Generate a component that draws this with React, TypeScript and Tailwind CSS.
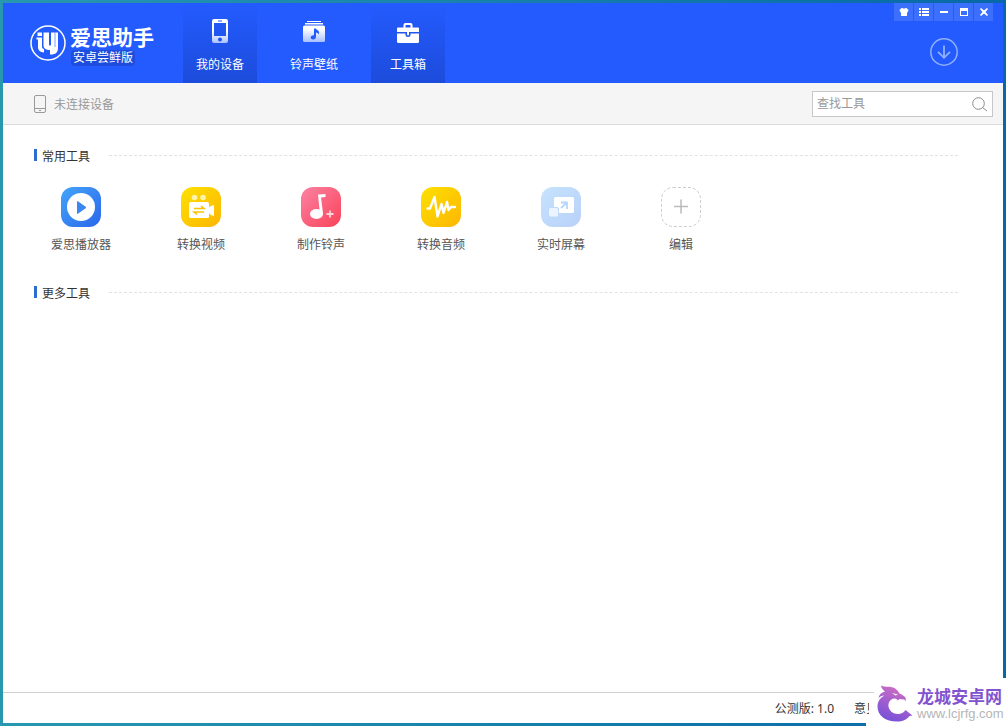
import React, { useState } from "react";

type IconProps = { className?: string };

const PhoneIcon = () => (
  <svg width="24" height="28" viewBox="0 0 24 28">
    <defs>
      <linearGradient id="phone" x1="0" y1="0" x2="0" y2="1">
        <stop offset="0.5" stopColor="#fff" />
        <stop offset="1" stopColor="#a9c0ff" />
      </linearGradient>
    </defs>
    <path
      fillRule="evenodd"
      fill="url(#phone)"
      d="M6 2h12a2 2 0 0 1 2 2v20a2 2 0 0 1-2 2H6a2 2 0 0 1-2-2V4a2 2 0 0 1 2-2zM6 6v13h12V6zM10 3.5v1h4v-1zM12 20.500a2 2 0 1 0 0 4a2 2 0 0 0 0-4z"
    />
  </svg>
);

const RingtoneIcon = () => (
  <svg width="24" height="28" viewBox="0 0 24 28">
    <defs>
      <linearGradient id="ringtone" x1="0" y1="0" x2="0" y2="1">
        <stop offset="0.2" stopColor="#fff" />
        <stop offset="1" stopColor="#a9c0ff" />
      </linearGradient>
    </defs>
    <path fill="#fff" d="M5 4h14v1H5zM3 6h18v1.500H3z" />
    <rect x="1" y="8.500" width="22" height="16.500" rx="1.500" fill="url(#ringtone)" />
    <path
      fill="#245bff"
      d="M12 11.500h1.800c.3 1.400 2.700 1.500 3.200 3.400.2 1-.1 1.800-.8 2.400 0-1.200-1-1.600-2.200-1.800v4.100c0 1.800-1.200 2.900-2.900 2.900-1.400 0-2.400-.8-2.400-2 0-1.500 1.600-2.500 3.300-2.200z"
    />
  </svg>
);

const ToolboxIcon = () => (
  <svg width="24" height="28" viewBox="0 0 24 28">
    <path
      fillRule="evenodd"
      fill="#fff"
      d="M7.500 10.500V8A2 2 0 0 1 9.500 6h5a2 2 0 0 1 2 2v2.500H22a1 1 0 0 1 1 1V15H1v-3.500a1 1 0 0 1 1-1zM9.500 10.500h5v-2A.5.5 0 0 0 14 8h-4a.5.5 0 0 0-.5.5z"
    />
    <path fill="#fff" d="M1 16.500h22v8a1.500 1.500 0 0 1-1.500 1.500h-19A1.500 1.500 0 0 1 1 24.500z" />
    <path fill="#2255ee" d="M9.500 15h5v2.500a2.500 2.500 0 0 1-5 0z" />
    <path fill="#fff" d="M11 14.500h2v3a1 1 0 0 1-2 0z" />
  </svg>
);

const LogoIcon = () => (
  <svg width="36" height="36" viewBox="0 0 36 36" fill="none">
    <circle cx="18" cy="18" r="17" stroke="#fff" strokeWidth="1.500" />
    <path fill="#fff" d="M7.500 7.500H12V11H7.500zM6.500 12.500H12v9c0 1.500.6 2.300 2 2.500v3.500c-3.800-.2-6-2-6-5.500v-7.500H6.500z" />
    <path
      fill="#fff"
      d="M13.500 7.500h5.500V19c0 1 .3 1.500 1 1.500s1-.5 1-1.500V7.500h7V23c0 4.500-2.500 6.500-7 6.500h-1V25c-4.500 0-6.500-1.500-6.500-5z"
    />
    <path stroke="#245bff" strokeWidth="0.600" d="M25 7.500V22" />
  </svg>
);

const DeviceIcon = () => (
  <svg width="14" height="20" viewBox="0 0 14 20" fill="none" stroke="#999">
    <rect x="1.500" y="1.500" width="11" height="17" rx="1.500" />
    <path d="M2 14.500h10M6 16.500h2" />
  </svg>
);

const SearchIcon = () => (
  <svg width="16" height="16" viewBox="0 0 16 16" fill="none" stroke="#8c8c8c">
    <circle cx="6.500" cy="7.500" r="5.800" />
    <path d="M10.500 11.500l4.500 3.500" />
  </svg>
);

const DownloadIcon = () => (
  <svg width="28" height="28" viewBox="0 0 28 28" fill="none" stroke="#8fb0ff">
    <circle cx="14" cy="14" r="13.200" strokeWidth="1.500" />
    <path strokeWidth="1.800" d="M14 7.500v12M8 13.800l6 6 6-6" />
  </svg>
);

const windowButtons = [
  { label: "皮肤", path: <path d="M3.500 2h1c.5.800 2.500.8 3 0h1L10.500 4 9.500 6.500H9V10H3V6.500h-.5L1.500 4z" /> },
  { label: "菜单", path: <path d="M1 2h2v2H1zM4 2h7v2H4zM1 5h2v2H1zM4 5h7v2H4zM1 8h2v2H1zM4 8h7v2H4z" /> },
  { label: "最小化", path: <path d="M2 5h8v2H2z" /> },
  { label: "最大化", path: <path fillRule="evenodd" d="M2 2h8v8H2zM3 5v4h6V5z" /> },
  { label: "关闭", path: <path d="M2 3l1-1 3 2.500L9 2l1 1-2.500 3L10 9l-1 1-3-2.500L3 10 2 9l2.500-3z" /> },
];

const navItems = [
  { label: "我的设备", icon: <PhoneIcon />, raised: true },
  { label: "铃声壁纸", icon: <RingtoneIcon />, raised: false },
  { label: "工具箱", icon: <ToolboxIcon />, raised: true },
];

const TileIcon = ({ id, from, to, children }: { id: string; from: string; to: string; children: React.ReactNode }) => (
  <svg width="40" height="40" viewBox="0 0 40 40" fill="none">
    <defs>
      <linearGradient id={id} x1="0" y1="0" x2="1" y2="1">
        <stop stopColor={from} />
        <stop offset="1" stopColor={to} />
      </linearGradient>
    </defs>
    <rect width="40" height="40" rx="12" fill={`url(#${id})`} />
    {children}
  </svg>
);

const tools = [
  {
    label: "爱思播放器",
    icon: (
      <TileIcon id="player" from="#43a5fa" to="#2b66ea">
        <circle cx="20" cy="20" r="14" fill="#fff" />
        <path d="M16.500 14.500v12l8.500-6z" fill="#3b86f2" stroke="#3b86f2" strokeLinejoin="round" />
      </TileIcon>
    ),
  },
  {
    label: "转换视频",
    icon: (
      <TileIcon id="video" from="#fde000" to="#fdb602">
        <circle cx="13.500" cy="10.500" r="2.800" fill="#fff3ac" />
        <circle cx="22" cy="10.500" r="2.800" fill="#fff3ac" />
        <rect x="8" y="15" width="20" height="16" rx="1.500" fill="#fff" />
        <path d="M28 20l1.500-.5V19l3.500-1v11l-3.500-1v-1L28 26.500z" fill="#fff" />
        <path d="M13 21.500h10l-3-2.500M23 25H13l3 2.500" stroke="#fbc403" strokeWidth="1.600" />
      </TileIcon>
    ),
  },
  {
    label: "制作铃声",
    icon: (
      <TileIcon id="music" from="#fb82a3" to="#fa4359">
        <ellipse cx="15.500" cy="27" rx="6.500" ry="5" fill="#fff" />
        <path d="M17 7.500l7.500-.5v3l-4.500.5 2 16-3 1z" fill="#fff" />
        <path d="M29 23.500v7M25.500 27h7" stroke="#ffd3da" strokeWidth="1.800" />
      </TileIcon>
    ),
  },
  {
    label: "转换音频",
    icon: (
      <TileIcon id="audio" from="#fde000" to="#fdb602">
        <path
          d="M6.500 21.500H9L13.500 10l3 19.500L20.500 17l2 9 3.500-11 1.500 8 2.500-3h4"
          stroke="#fff"
          strokeWidth="2.400"
          strokeLinejoin="round"
          strokeLinecap="round"
        />
      </TileIcon>
    ),
  },
  {
    label: "实时屏幕",
    icon: (
      <TileIcon id="screen" from="#c5e3fe" to="#b9d0f8">
        <rect x="13" y="10" width="20" height="16" rx="1.500" fill="#fff" />
        <path d="M20 21l6-5.500M20 15.500h6V22" stroke="#b8d6fa" strokeWidth="1.800" />
        <rect x="7" y="20" width="11" height="10" rx="2" fill="#bfdafa" />
        <rect x="8" y="21" width="9" height="8.500" rx="1.500" fill="#ecf5ff" />
      </TileIcon>
    ),
  },
  {
    label: "编辑",
    icon: (
      <svg width="40" height="40" viewBox="0 0 40 40" fill="none">
        <rect x="0.500" y="0.500" width="39" height="39" rx="11.500" stroke="#ccc" strokeDasharray="3 2" />
        <path d="M20 12.500v14M13 19.500h14" stroke="#bbb" strokeWidth="1.500" />
      </svg>
    ),
  },
];

const SectionTitle = ({ children }: { children: React.ReactNode }) => (
  <div className="flex items-center h-5 pl-[31px] pr-[45px]">
    <span className="w-[3px] h-3 bg-[#2a6fd0]" />
    <h2 className="ml-[5px] pt-[3px] text-[12px] leading-5 text-[#333]">{children}</h2>
    <span className="ml-[19px] flex-1 border-t border-dashed border-[#e2e2e2]" />
  </div>
);

const DragonIcon = ({ className }: IconProps) => (
  <svg className={className} width="38" height="38" viewBox="0 0 38 38">
    <defs>
      <linearGradient id="dragon" x1="0.700" y1="0" x2="0.300" y2="1">
        <stop stopColor="#d66fc0" />
        <stop offset="0.500" stopColor="#a45fce" />
        <stop offset="1" stopColor="#7650d8" />
      </linearGradient>
    </defs>
    <path
      fill="url(#dragon)"
      d="M4 .5c4 2 8 .5 12 2C20 4 21 6 22.500 8.500c2 1 4.500 2 6 4l.5 3.500-2-1.500-4.500-.5-1.500 1.500c-1-1.500-2.500-2-4.500-2C13 14.500 11 18 11.500 21.500 12.200 26 16 29 21 29c3 0 6-1.500 7.500-4l7 5.500-3 .5C30 34.500 26 36.500 20 36.500 8.500 36.500.5 30.500.5 21.500.5 16.500 3 13 7.500 10.500 4.500 10.500 3 11.500 1.500 13 2 9.500 4.500 7.500 8 6.500 6 5 4.500 3.500 4 .5z"
    />
    <path fill="#fff" d="M15 8l6 1.500-2.500 1z" />
  </svg>
);

export default function App() {
  const [query, setQuery] = useState("");

  return (
    <div className="relative flex flex-col min-h-screen p-[3px] bg-linear-to-r from-[#2798b0] to-[#0868a8] font-['Noto_Sans','Noto_Sans_CJK_SC',sans-serif] text-[12px] leading-5">
      <header className="flex h-20 bg-[#245bff] text-white">
        {/* Brand */}
        <div className="flex items-center w-[180px] pl-[27px]">
          <LogoIcon />
          <div className="ml-1 pt-1 whitespace-nowrap">
            <h1 className="text-[21px] leading-[26px] font-bold">爱思助手</h1>
            <span className="block w-16 h-4 ml-px rounded-sm bg-[#1e4ddd] text-center leading-4">安卓尝鲜版</span>
          </div>
        </div>

        <nav className="flex gap-5">
          {navItems.map((item) => (
            <button
              key={item.label}
              className={`flex flex-col items-center w-[74px] pt-[14px] gap-[10px] ${item.raised ? "bg-linear-to-b from-[#245bff] to-[#1d4cdb]" : ""}`}
            >
              {item.icon}
              <span>{item.label}</span>
            </button>
          ))}
        </nav>

        <div className="flex flex-col items-end ml-auto pr-[10px]">
          <div className="flex gap-px">
            {windowButtons.map((b) => (
              <button key={b.label} aria-label={b.label} className="flex items-center justify-center w-[19px] h-[18px] bg-[#3d6fff]">
                <svg width="12" height="12" viewBox="0 0 12 12" fill="#fff">
                  {b.path}
                </svg>
              </button>
            ))}
          </div>
          <button aria-label="下载" className="mt-[17px] mr-[35px]">
            <DownloadIcon />
          </button>
        </div>
      </header>

      {/* Device status + search */}
      <div className="flex items-center justify-between h-[42px] pl-[30px] pr-[10px] bg-[#f5f5f5] border-b border-[#dcdcdc]">
        <div className="flex items-center gap-[7px] text-[#999]">
          <DeviceIcon />
          <span className="pt-[2px]">未连接设备</span>
        </div>
        <label className="flex items-center w-[181px] h-[26px] px-1 bg-white border border-[#c8c8c8]">
          <input
            aria-label="查找工具"
            placeholder="查找工具"
            value={query}
            onChange={(e) => setQuery(e.target.value)}
            className="flex-1 min-w-0 outline-none placeholder:text-[#999]"
          />
          <SearchIcon />
        </label>
      </div>

      <main className="flex-1 pt-5 bg-white">
        <SectionTitle>常用工具</SectionTitle>
        <div className="flex flex-wrap pl-[18px] pt-[22px] pb-[27px]">
          {tools.map((tool) => (
            <button key={tool.label} className="flex flex-col items-center w-[120px] gap-2 text-[#555]">
              {tool.icon}
              <span>{tool.label}</span>
            </button>
          ))}
        </div>
        <SectionTitle>更多工具</SectionTitle>
      </main>

      <footer className="flex items-center justify-end h-[31px] gap-5 pt-px pr-[134px] bg-white border-t border-[#d0d0d0] text-[#333]">
        <span>公测版: 1.0</span>
        <span className="w-[15px] overflow-hidden whitespace-nowrap">意见</span>
      </footer>

      {/* Site badge, notched so the footer rule runs up to the dragon */}
      <div className="absolute right-0 bottom-0 flex items-center w-[140px] h-12 pt-1 pl-[11px] bg-white [clip-path:polygon(8px_0,100%_0,100%_100%,0_100%,0_44px,8px_44px)]">
        <DragonIcon className="shrink-0" />
        <div className="ml-[2px] whitespace-nowrap">
          <p className="text-[17px] leading-5 font-bold text-[#8353cf]">龙城安卓网</p>
          <p className="font-['Liberation_Sans',sans-serif] text-[13px] leading-[14px] text-[#b5b5b5]">www.lcjrfg.com</p>
        </div>
      </div>
    </div>
  );
}
